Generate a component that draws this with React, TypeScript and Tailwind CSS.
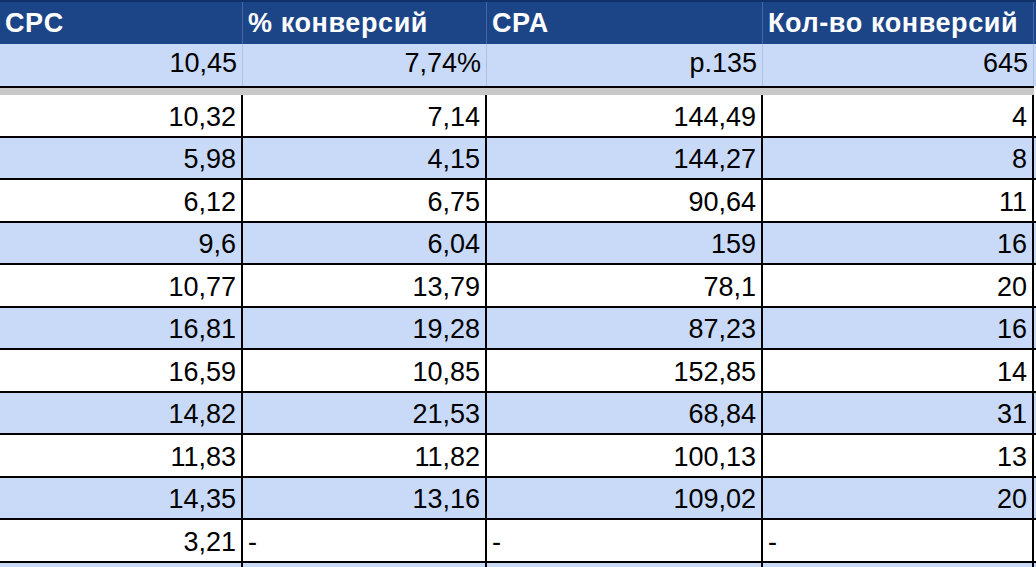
const headers = ["CPC", "% конверсий", "CPA", "Кол-во конверсий"];
const summary = ["10,45", "7,74%", "р.135", "645"];

const rows: string[][] = [
  ["10,32", "7,14", "144,49", "4"],
  ["5,98", "4,15", "144,27", "8"],
  ["6,12", "6,75", "90,64", "11"],
  ["9,6", "6,04", "159", "16"],
  ["10,77", "13,79", "78,1", "20"],
  ["16,81", "19,28", "87,23", "16"],
  ["16,59", "10,85", "152,85", "14"],
  ["14,82", "21,53", "68,84", "31"],
  ["11,83", "11,82", "100,13", "13"],
  ["14,35", "13,16", "109,02", "20"],
  ["3,21", "-", "-", "-"],
];

const cols = "grid grid-cols-[243px_244px_276px_271px]";

export default function App() {
  return (
    <div className="h-[567px] w-[1036px] overflow-hidden bg-white font-['Liberation_Sans',Arial,sans-serif] text-[27px] leading-none text-black">
      {/* header */}
      <div className={`${cols} h-[44px] border-t-2 border-[#10306a] bg-[#1c4587]`}>
        {headers.map((h) => (
          <div
            key={h}
            className="flex items-center border-r border-[#4866a0] px-[5px] font-bold tracking-[0.6px] text-white"
          >
            {h}
          </div>
        ))}
      </div>

      {/* totals */}
      <div className={`${cols} h-[42px] bg-[#c9daf8]`}>
        {summary.map((v) => (
          <div
            key={v}
            className="flex items-center justify-end border-r border-[#b0c1de] px-[5px] pb-1"
          >
            {v}
          </div>
        ))}
      </div>
      <div className="h-[2px] w-[1034px] bg-black" />
      <div className="h-[7px] w-[1034px] bg-[#c8c8c8]" />

      {/* data */}
      {rows.map((r, i) => (
        <div
          key={i}
          className={`${cols} h-[42.5px] border-b-2 border-black ${
            i % 2 === 1 ? "bg-[#c9daf8]" : "bg-white"
          }`}
        >
          {r.map((v, j) => (
            <div
              key={j}
              className={`flex items-center border-r-2 border-black px-[5px] pt-1 ${
                v === "-" ? "justify-start" : "justify-end"
              }`}
            >
              {v}
            </div>
          ))}
        </div>
      ))}
      <div className={`${cols} h-[20px] bg-[#c9daf8]`}>
        {headers.map((h) => (
          <div key={h} className="border-r-2 border-black" />
        ))}
      </div>
    </div>
  );
}
